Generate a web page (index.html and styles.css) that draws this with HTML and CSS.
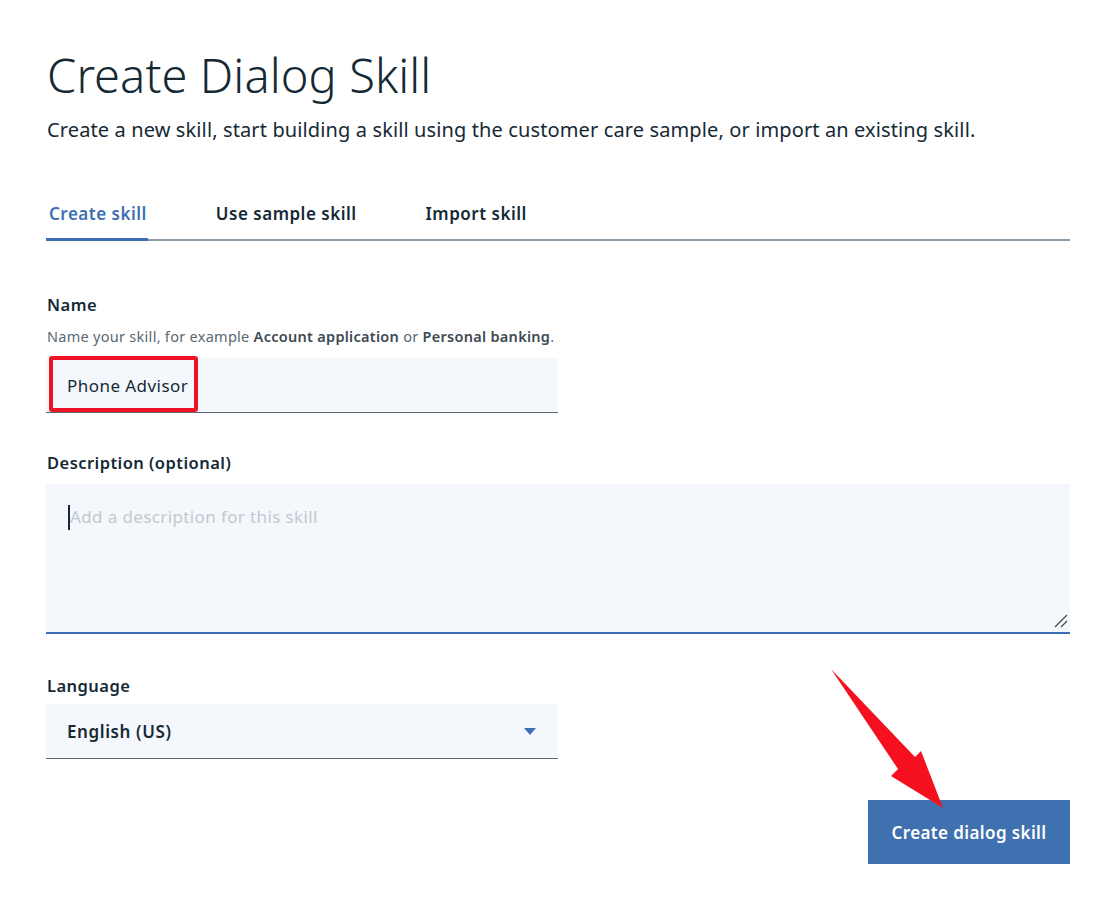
FILE: index.html
```html
<!DOCTYPE html>
<html lang="en">
<head>
<meta charset="utf-8">
<title>Create Dialog Skill</title>
<link rel="stylesheet" href="styles.css">
</head>
<body>
<main class="page">
  <h1 class="title">Create Dialog Skill</h1>
  <p class="subtitle">Create a new skill, start building a skill using the customer care sample, or import an existing skill.</p>

  <nav class="tabs">
    <span class="tab tab-active">Create skill</span>
    <span class="tab">Use sample skill</span>
    <span class="tab">Import skill</span>
  </nav>

  <section class="form">
    <div class="field field-name">
      <div class="label">Name</div>
      <div class="helper">Name your skill, for example <b>Account application</b> or <b>Personal banking</b>.</div>
      <div class="input">
        <span class="input-text">Phone Advisor</span>
        <span class="highlight"></span>
      </div>
    </div>

    <div class="field field-desc">
      <div class="label">Description (optional)</div>
      <div class="textarea">
        <span class="cursor"></span><span class="placeholder">Add a description for this skill</span>
        <svg class="grip" width="14" height="14" viewBox="0 0 14 14"><path d="M1 13 L13 1 M7 13 L13 7" stroke="#4d4d4d" stroke-width="1.3" fill="none"/></svg>
      </div>
    </div>

    <div class="field field-lang">
      <div class="label">Language</div>
      <div class="select">
        <span class="select-text">English (US)</span>
        <svg class="caret" width="12" height="7" viewBox="0 0 12 7"><path d="M0 0 H12 L6 7 Z" fill="#3d70b2"/></svg>
      </div>
    </div>

    <div class="actions">
      <button class="btn">Create dialog skill</button>
    </div>
  </section>

  <svg class="arrow" width="1118" height="908" viewBox="0 0 1118 908">
    <polygon points="831,669 915,757 921,751 943,808 891,776 898,769" fill="#f5101f"/>
  </svg>
</main>
</body>
</html>
```

FILE: styles.css
```css
* { box-sizing: border-box; }

html, body {
  margin: 0;
  padding: 0;
  background: #ffffff;
}

body {
  font-family: "Noto Sans", "Open Sans", sans-serif;
  color: #152935;
}

.page {
  position: relative;
  width: 1118px;
  min-height: 908px;
  padding: 47px 48px 0 46px;
}

.title {
  margin: 0;
  font-size: 47px;
  font-weight: 300;
  line-height: 56px;
  letter-spacing: 0.1px;
  color: #152935;
  padding-left: 1px;
}

.subtitle {
  margin: 13px 0 0 1px;
  font-size: 20px;
  line-height: 28px;
  letter-spacing: 0.12px;
  color: #152935;
}

.tabs {
  margin-top: 52px;
  display: flex;
  gap: 65px;
  box-shadow: inset 0 -2px 0 #8c9ba5;
}

.tab {
  padding: 6px 1px 12px 3px;
  font-size: 17px;
  font-weight: 600;
  line-height: 24px;
  letter-spacing: 0.5px;
  color: #152935;
  border-bottom: 3px solid transparent;
}

.tab-active {
  color: #3d70b2;
  border-bottom-color: #3d70b2;
}

.form {
  display: flex;
  flex-direction: column;
}

.label {
  font-size: 16.5px;
  font-weight: 600;
  line-height: 20px;
  letter-spacing: 0.45px;
  color: #152935;
  padding-left: 1px;
}

.field-name { margin-top: 54px; }

.helper {
  margin-top: 12px;
  font-size: 14.5px;
  line-height: 18px;
  letter-spacing: 0.28px;
  color: #5a6872;
  padding-left: 1px;
}

.helper b {
  font-weight: 600;
  color: #3d4a53;
}

.input {
  position: relative;
  margin-top: 13px;
  width: 512px;
  height: 55px;
  background: #f4f7fb;
  border-bottom: 1px solid #5a6872;
  display: flex;
  align-items: center;
  padding-left: 21px;
}

.input-text {
  font-size: 17px;
  letter-spacing: 0.45px;
  color: #152935;
}

.highlight {
  position: absolute;
  left: 3px;
  top: -2px;
  width: 149px;
  height: 56px;
  border: 4px solid #ee1426;
  border-radius: 3px;
}

.field-desc { margin-top: 40px; }

.textarea {
  position: relative;
  margin-top: 11px;
  width: 1024px;
  height: 150px;
  background: #f4f7fb;
  border-bottom: 2px solid #3d70b2;
  padding: 20px 0 0 22px;
  display: flex;
  align-items: flex-start;
}

.cursor {
  display: inline-block;
  width: 2px;
  height: 25px;
  background: #152935;
  margin-top: 1px;
}

.placeholder {
  font-size: 17px;
  line-height: 26px;
  letter-spacing: 0.38px;
  color: #c2c9cf;
}

.grip {
  position: absolute;
  right: 2px;
  bottom: 4px;
}

.field-lang { margin-top: 42px; }

.select {
  margin-top: 8px;
  width: 512px;
  height: 55px;
  background: #f4f7fb;
  border-bottom: 1px solid #5a6872;
  display: flex;
  align-items: center;
  justify-content: space-between;
  padding: 0 22px 0 21px;
}

.select-text {
  font-size: 17px;
  font-weight: 600;
  letter-spacing: 0.6px;
  color: #152935;
}

.caret {
  display: block;
}

.actions {
  display: flex;
  justify-content: flex-end;
  margin-top: 41px;
}

.btn {
  width: 202px;
  height: 64px;
  border: none;
  border-radius: 0;
  background: #3f71b1;
  color: #ffffff;
  font-family: inherit;
  font-size: 17px;
  font-weight: 600;
  letter-spacing: 0.39px;
  padding: 0;
}

.arrow {
  position: absolute;
  left: 0;
  top: 0;
  pointer-events: none;
}
```
